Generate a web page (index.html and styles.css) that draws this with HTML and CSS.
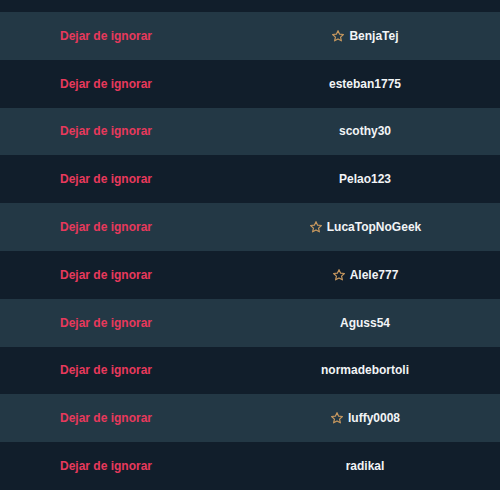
FILE: index.html
```html
<!DOCTYPE html>
<html>
<head>
<meta charset="utf-8">
<link rel="stylesheet" href="styles.css">
</head>
<body>
<div class="list">
  <div class="top"></div>
  <div class="row alt"><span class="action">Dejar de ignorar</span><span class="user"><svg class="star" viewBox="0 0 24 24"><path d="M12 2.8l2.8 6 6.5.7-4.9 4.4 1.4 6.4L12 17l-5.8 3.3 1.4-6.4-4.9-4.4 6.5-.7z"/></svg>BenjaTej</span></div>
  <div class="row"><span class="action">Dejar de ignorar</span><span class="user">esteban1775</span></div>
  <div class="row alt"><span class="action">Dejar de ignorar</span><span class="user">scothy30</span></div>
  <div class="row"><span class="action">Dejar de ignorar</span><span class="user">Pelao123</span></div>
  <div class="row alt"><span class="action">Dejar de ignorar</span><span class="user"><svg class="star" viewBox="0 0 24 24"><path d="M12 2.8l2.8 6 6.5.7-4.9 4.4 1.4 6.4L12 17l-5.8 3.3 1.4-6.4-4.9-4.4 6.5-.7z"/></svg>LucaTopNoGeek</span></div>
  <div class="row"><span class="action">Dejar de ignorar</span><span class="user"><svg class="star" viewBox="0 0 24 24"><path d="M12 2.8l2.8 6 6.5.7-4.9 4.4 1.4 6.4L12 17l-5.8 3.3 1.4-6.4-4.9-4.4 6.5-.7z"/></svg>Alele777</span></div>
  <div class="row alt"><span class="action">Dejar de ignorar</span><span class="user">Aguss54</span></div>
  <div class="row"><span class="action">Dejar de ignorar</span><span class="user">normadebortoli</span></div>
  <div class="row alt"><span class="action">Dejar de ignorar</span><span class="user"><svg class="star" viewBox="0 0 24 24"><path d="M12 2.8l2.8 6 6.5.7-4.9 4.4 1.4 6.4L12 17l-5.8 3.3 1.4-6.4-4.9-4.4 6.5-.7z"/></svg>luffy0008</span></div>
  <div class="row"><span class="action">Dejar de ignorar</span><span class="user">radikal</span></div>
</div>
</body>
</html>
```
FILE: styles.css
```css
html, body {
  margin: 0;
  padding: 0;
  background: #111e2b;
}
.list {
  width: 500px;
  font-family: "Liberation Sans", Arial, sans-serif;
  font-weight: bold;
  font-size: 12px;
}
.top {
  height: 12px;
  background: #111e2b;
}
.row {
  height: 47.8px;
  display: grid;
  grid-template-columns: 230px 1fr;
  align-items: center;
  background: #111e2b;
}
.row.alt {
  background: #233845;
}
.action {
  color: #e8395c;
  padding-left: 60px;
}
.user {
  color: #f2f4f6;
  display: flex;
  justify-content: center;
  align-items: center;
  gap: 4px;
}
.star {
  width: 14px;
  height: 14px;
  fill: none;
  stroke: #c9995f;
  stroke-width: 2;
  stroke-linejoin: round;
}
```
